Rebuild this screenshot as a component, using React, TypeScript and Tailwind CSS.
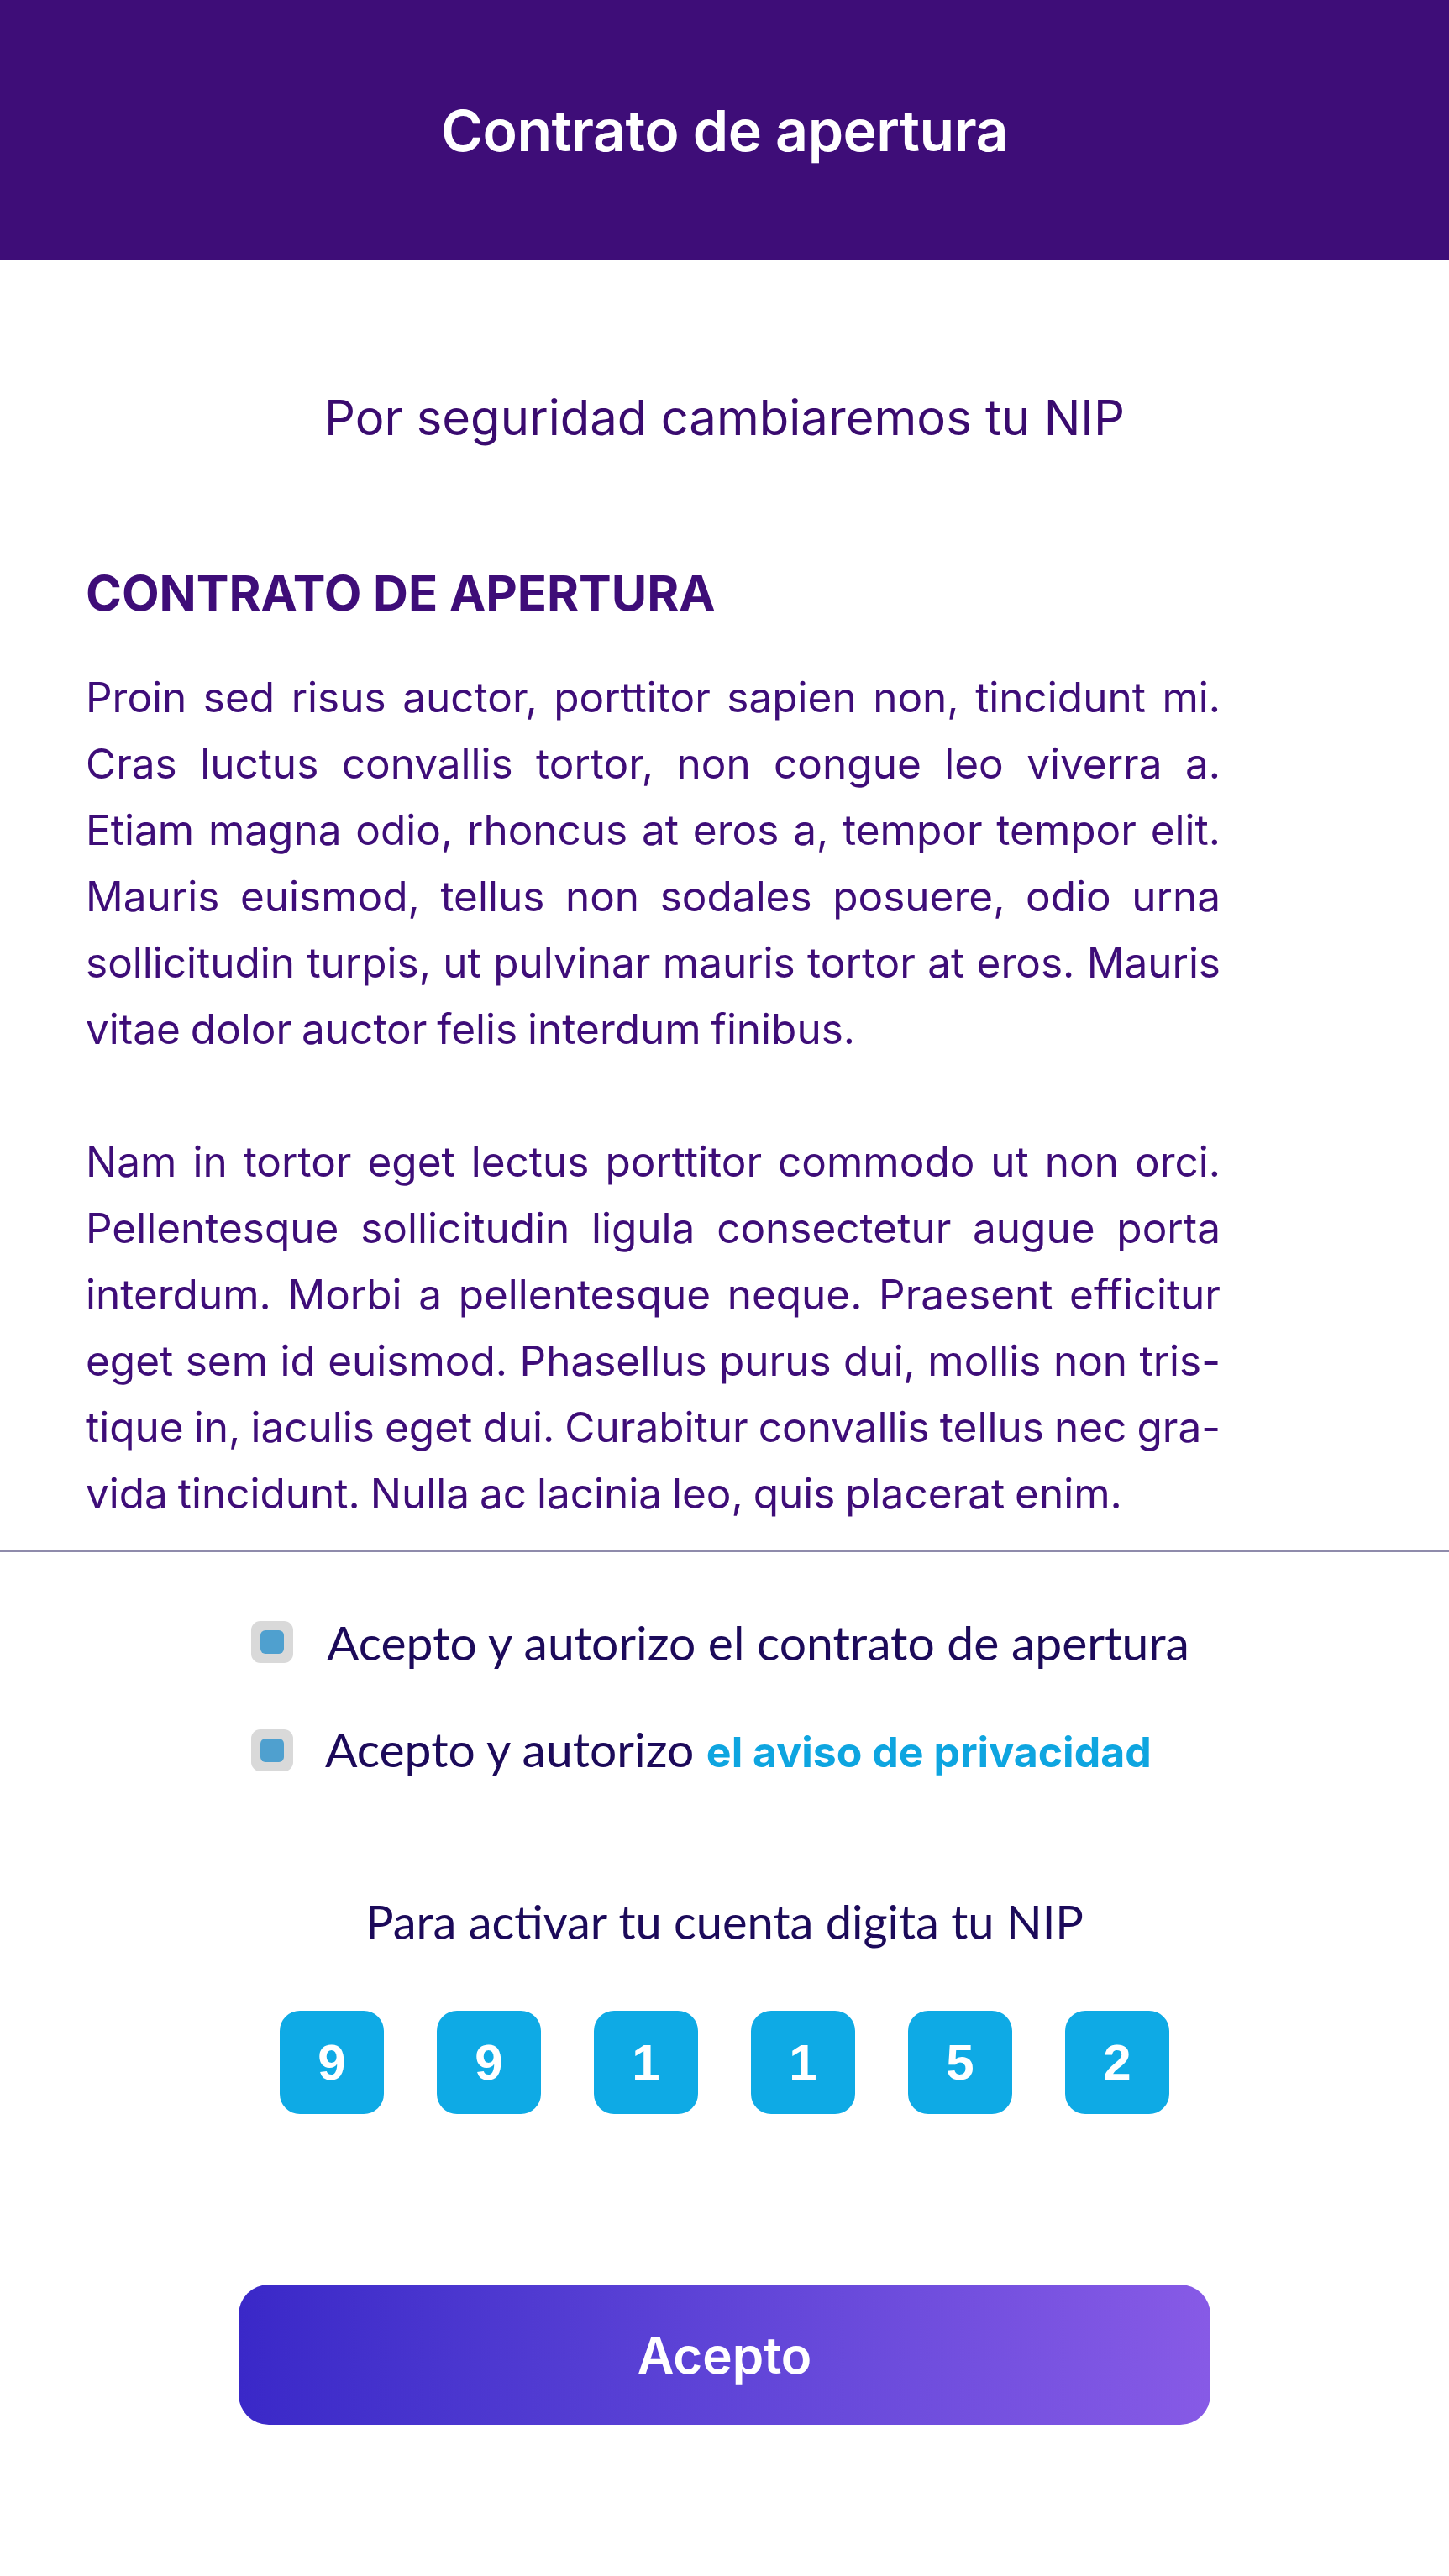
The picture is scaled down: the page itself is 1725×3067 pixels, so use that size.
import React from "react";

const para1 = [
  "Proin sed risus auctor, porttitor sapien non, tincidunt mi.",
  "Cras luctus convallis tortor, non congue leo viverra a.",
  "Etiam magna odio, rhoncus at eros a, tempor tempor elit.",
  "Mauris euismod, tellus non sodales posuere, odio urna",
  "sollicitudin turpis, ut pulvinar mauris tortor at eros. Mauris",
  "vitae dolor auctor felis interdum finibus.",
];

const para2 = [
  "Nam in tortor eget lectus porttitor commodo ut non orci.",
  "Pellentesque sollicitudin ligula consectetur augue porta",
  "interdum. Morbi a pellentesque neque. Praesent efficitur",
  "eget sem id euismod. Phasellus purus dui, mollis non tris-",
  "tique in, iaculis eget dui. Curabitur convallis tellus nec gra-",
  "vida tincidunt. Nulla ac lacinia leo, quis placerat enim.",
];

const pin = ["9", "9", "1", "1", "5", "2"];

function Paragraph({ lines }: { lines: string[] }) {
  return (
    <div>
      {lines.map((line, i) => (
        <div
          key={i}
          className={
            i < lines.length - 1
              ? "text-justify [text-align-last:justify] whitespace-nowrap"
              : "whitespace-nowrap"
          }
        >
          {line}
        </div>
      ))}
    </div>
  );
}

function Checkbox() {
  return (
    <div className="w-[50px] h-[50px] rounded-[11px] bg-[#d9d9d9] flex items-center justify-center shrink-0">
      <div className="w-[28px] h-[28px] rounded-[6px] bg-[#4fa0cf]" />
    </div>
  );
}

export default function App() {
  return (
    <main className="w-[1725px] min-h-[3067px] bg-white font-['Inter',sans-serif]">
      {/* Header */}
      <header className="h-[309px] bg-[#3e0d78] flex items-center justify-center">
        <h1 className="text-white text-[68px] font-semibold tracking-[-0.5px]">Contrato de apertura</h1>
      </header>

      <p className="mt-[154px] text-center text-[58px] leading-[68px] text-[#3a0b6f]">
        Por seguridad cambiaremos tu NIP
      </p>

      {/* Contrato */}
      <section className="pl-[102px] mt-[141px]">
        <h2 className="text-[58px] leading-[68px] font-bold text-[#3e0d78]">CONTRATO DE APERTURA</h2>
        <div className="w-[1351px] mt-[51px] text-[49.5px] leading-[79px] [word-spacing:-2px] text-[#3e0d78] space-y-[79px]">
          <Paragraph lines={para1} />
          <Paragraph lines={para2} />
        </div>
      </section>

      <div className="mt-[28px] h-[2px] bg-[#8f8bab]" />

      {/* Aceptaciones */}
      <div className="pl-[299px] pt-[82px] flex flex-col gap-[77px] font-['Lato',sans-serif] text-[57px] leading-[50px] text-[#1c0a5a]">
        <label className="flex items-center gap-[40px]">
          <Checkbox />
          <span>Acepto y autorizo el contrato de apertura</span>
        </label>
        <label className="flex items-center gap-[38px]">
          <Checkbox />
          <span>
            Acepto y autorizo{" "}
            <span className="font-['Inter',sans-serif] font-bold text-[50px] text-[#0ea5e0]">el aviso de privacidad</span>
          </span>
        </label>
      </div>

      {/* NIP */}
      <p className="mt-[147px] text-center font-['Lato',sans-serif] text-[56px] leading-[60px] text-[#1c0a5a]">
        Para activar tu cuenta digita tu NIP
      </p>
      <div className="mt-[76px] flex justify-center gap-[63px]">
        {pin.map((d, i) => (
          <div
            key={i}
            className="w-[124px] h-[123px] rounded-[24px] bg-[#0eaae5] flex items-center justify-center text-white font-['Liberation_Sans',sans-serif] font-bold text-[60px]"
          >
            {d}
          </div>
        ))}
      </div>

      <div className="mt-[203px] flex justify-center pb-[178px]">
        <button className="w-[1157px] h-[167px] rounded-[36px] bg-gradient-to-r from-[#3a28c8] to-[#875ae6] text-white text-[60px] font-semibold">
          Acepto
        </button>
      </div>
    </main>
  );
}
